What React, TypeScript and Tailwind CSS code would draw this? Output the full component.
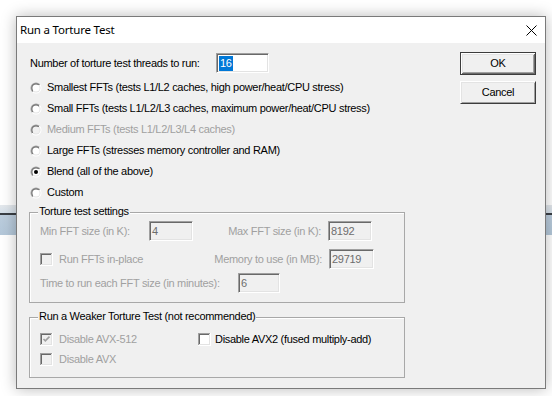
import React, { useId } from "react";

const body = "font-['Liberation_Sans',Arial,sans-serif] text-[11px] tracking-[-0.3px] leading-none";

function Radio({ checked = false, disabled = false }: { checked?: boolean; disabled?: boolean }) {
  const id = useId().replace(/:/g, "");
  return (
    <svg width="12" height="12" viewBox="0 0 12 12" className="shrink-0">
      <defs>
        <linearGradient id={`o${id}`} x1="0" y1="0" x2="1" y2="1">
          <stop offset="0.5" stopColor="#a0a0a0" />
          <stop offset="0.5" stopColor="#ffffff" />
        </linearGradient>
        <linearGradient id={`i${id}`} x1="0" y1="0" x2="1" y2="1">
          <stop offset="0.5" stopColor="#696969" />
          <stop offset="0.5" stopColor="#e3e3e3" />
        </linearGradient>
      </defs>
      <circle cx="6" cy="6" r="5.5" fill={`url(#o${id})`} />
      <circle cx="6" cy="6" r="4.5" fill={`url(#i${id})`} />
      <circle cx="6" cy="6" r="3.6" fill={disabled ? "#f0f0f0" : "#ffffff"} />
      {checked && <circle cx="6" cy="6" r="2" fill="#000" />}
    </svg>
  );
}

function Check({ checked = false, disabled = false }: { checked?: boolean; disabled?: boolean }) {
  return (
    <svg width="13" height="13" viewBox="0 0 13 13" className="shrink-0">
      <rect x="0" y="0" width="13" height="13" fill="#ffffff" />
      <rect x="0" y="0" width="12" height="12" fill="#a0a0a0" />
      <rect x="1" y="1" width="11" height="11" fill="#e3e3e3" />
      <rect x="1" y="1" width="10" height="10" fill="#696969" />
      <rect x="2" y="2" width="9" height="9" fill={disabled ? "#f0f0f0" : "#ffffff"} />
      {checked && (
        <polyline points="3.5,6 5.3,7.8 9.5,3.6" fill="none" stroke={disabled ? "#a0a0a0" : "#000"} strokeWidth="1.6" />
      )}
    </svg>
  );
}

function Field({ w, value, disabled = false, selected = false }: { w: string; value: string; disabled?: boolean; selected?: boolean }) {
  return (
    <div
      className={`${w} h-[20px] shrink-0 border border-t-[#a0a0a0] border-l-[#a0a0a0] border-b-white border-r-white shadow-[inset_1px_1px_0_#696969,inset_-1px_-1px_0_#e3e3e3] flex items-center pl-[2px] ${
        disabled ? "bg-[#f0f0f0] text-[#6d6d6d]" : "bg-white text-black"
      }`}
    >
      {selected ? <span className="bg-[#0078d7] text-white px-px py-[2px]">{value}</span> : <span>{value}</span>}
    </div>
  );
}

function RadioRow({ label, checked, disabled }: { label: string; checked?: boolean; disabled?: boolean }) {
  return (
    <div className={`h-[21px] flex items-center pl-px gap-[5px] ${disabled ? "text-[#a0a0a0]" : "text-black"}`}>
      <Radio checked={checked} disabled={disabled} />
      <span>{label}</span>
    </div>
  );
}

function Button({ label, isDefault = false, className = "" }: { label: string; isDefault?: boolean; className?: string }) {
  return (
    <div
      className={`w-[76px] h-[23px] flex items-center justify-center bg-[#f0f0f0] text-black ${
        isDefault
          ? "border border-[#3c3c3c] shadow-[inset_1px_1px_0_#fff,inset_-1px_-1px_0_#696969,inset_2px_2px_0_#e3e3e3,inset_-2px_-2px_0_#a0a0a0]"
          : "border border-t-white border-l-white border-b-[#3c3c3c] border-r-[#3c3c3c] shadow-[inset_1px_1px_0_#e3e3e3,inset_-1px_-1px_0_#a0a0a0]"
      } ${className}`}
    >
      {label}
    </div>
  );
}

export default function App() {
  return (
    <div className="relative w-[552px] h-[396px] bg-white overflow-hidden">
      {/* background window strip behind the dialog */}
      <div className="absolute left-0 top-[205px] w-[552px] flex flex-col">
        <div className="h-[8px] bg-gradient-to-b from-[#e4e8ec] to-[#d5e0ea]" />
        <div className="h-[2px] bg-[#3a3f45]" />
        <div className="h-[20px] bg-gradient-to-b from-[#bccddd] to-[#b3c7d9]" />
      </div>

      {/* dialog */}
      <div className="absolute left-[16px] top-[16px] w-[530px] h-[373px] border border-[#7a7a7a] shadow-[0_0_14px_rgba(0,0,0,0.28)] flex flex-col bg-[#f0f0f0]">
        <div className="h-[26px] bg-white flex items-center justify-between pl-[3px] pr-[8px]">
          <span className="font-['Noto_Sans',sans-serif] text-[11.5px] tracking-[-0.2px] text-black leading-none">Run a Torture Test</span>
          <svg width="11" height="11" viewBox="0 0 11 11">
            <path d="M0.5 0.5 L10.5 10.5 M10.5 0.5 L0.5 10.5" stroke="#000" strokeWidth="1" />
          </svg>
        </div>

        <div className={`flex-1 flex pl-[12px] ${body}`}>
          {/* left column */}
          <div className="w-[376px] flex flex-col">
            <div className="mt-[10px] h-[20px] flex items-center pl-px">
              <span className="w-[186px]">Number of torture test threads to run:</span>
              <Field w="w-[53px]" value="16" selected />
            </div>

            <div className="mt-[4px] flex flex-col">
              <RadioRow label="Smallest FFTs (tests L1/L2 caches, high power/heat/CPU stress)" />
              <RadioRow label="Small FFTs (tests L1/L2/L3 caches, maximum power/heat/CPU stress)" />
              <RadioRow label="Medium FFTs (tests L1/L2/L3/L4 caches)" disabled />
              <RadioRow label="Large FFTs (stresses memory controller and RAM)" />
              <RadioRow label="Blend (all of the above)" checked />
              <RadioRow label="Custom" />
            </div>

            {/* Torture test settings */}
            <div className="relative mt-[9px] h-[91px] border border-[#a8a8a8] shadow-[inset_1px_1px_0_#fff] text-[#a0a0a0]">
              <span className="absolute left-[8px] top-[-7px] bg-[#f0f0f0] px-px text-black">Torture test settings</span>
              <div className="mt-[8px] h-[20px] flex items-center pl-[10px]">
                <span className="w-[109px]">Min FFT size (in K):</span>
                <Field w="w-[44px]" value="4" disabled />
                <span className="w-[135px] text-right pr-[7px]">Max FFT size (in K):</span>
                <Field w="w-[44px]" value="8192" disabled />
              </div>
              <div className="mt-[8px] h-[20px] flex items-center pl-[10px]">
                <div className="w-[289px] flex items-center">
                  <Check disabled />
                  <span className="ml-[6px]">Run FFTs in-place</span>
                  <span className="ml-auto pr-[7px]">Memory to use (in MB):</span>
                </div>
                <Field w="w-[45px]" value="29719" disabled />
              </div>
              <div className="mt-[4px] h-[20px] flex items-center pl-[10px]">
                <span className="w-[198px]">Time to run each FFT size (in minutes):</span>
                <Field w="w-[42px]" value="6" disabled />
              </div>
            </div>

            {/* Weaker torture test */}
            <div className="relative mt-[14px] h-[61px] border border-[#a8a8a8] shadow-[inset_1px_1px_0_#fff]">
              <span className="absolute left-[8px] top-[-7px] bg-[#f0f0f0] px-px text-black">
                Run a Weaker Torture Test (not recommended)
              </span>
              <div className="mt-[11px] h-[20px] flex items-center pl-[10px]">
                <div className="w-[158px] flex items-center text-[#a0a0a0]">
                  <Check checked disabled />
                  <span className="ml-[6px]">Disable AVX-512</span>
                </div>
                <div className="flex items-center text-black">
                  <Check />
                  <span className="ml-[4px]">Disable AVX2 (fused multiply-add)</span>
                </div>
              </div>
              <div className="h-[20px] flex items-center pl-[10px] text-[#a0a0a0]">
                <Check disabled />
                <span className="ml-[6px]">Disable AVX</span>
              </div>
            </div>
          </div>

          {/* buttons */}
          <div className="ml-[55px] flex flex-col">
            <Button label="OK" isDefault className="mt-[9px]" />
            <Button label="Cancel" className="mt-[6px]" />
          </div>
        </div>
      </div>
    </div>
  );
}
